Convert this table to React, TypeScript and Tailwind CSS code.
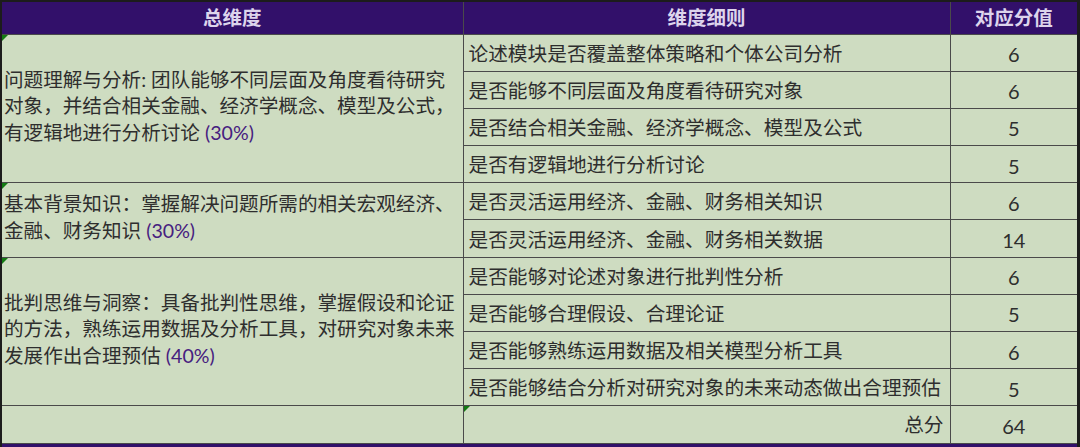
import React from "react";

const F = "font-['Lato','Noto_Sans_CJK_SC',sans-serif]";

const Tri = () => (
  <div className="absolute left-0 top-0 h-0 w-0 border-t-[6px] border-r-[6px] border-t-[#137a13] border-r-transparent" />
);

const P = ({ children }: { children: React.ReactNode }) => (
  <span className="text-[#46207f]">{children}</span>
);

type Row = { d: string; v: string };

const groups: { title: React.ReactNode; rows: Row[] }[] = [
  {
    title: (
      <>
        问题理解与分析: 团队能够不同层面及角度看待研究
        <br />
        对象，并结合相关金融、经济学概念、模型及公式，
        <br />
        有逻辑地进行分析讨论 <P>(30%)</P>
      </>
    ),
    rows: [
      { d: "论述模块是否覆盖整体策略和个体公司分析", v: "6" },
      { d: "是否能够不同层面及角度看待研究对象", v: "6" },
      { d: "是否结合相关金融、经济学概念、模型及公式", v: "5" },
      { d: "是否有逻辑地进行分析讨论", v: "5" },
    ],
  },
  {
    title: (
      <>
        基本背景知识：掌握解决问题所需的相关宏观经济、
        <br />
        金融、财务知识 <P>(30%)</P>
      </>
    ),
    rows: [
      { d: "是否灵活运用经济、金融、财务相关知识", v: "6" },
      { d: "是否灵活运用经济、金融、财务相关数据", v: "14" },
    ],
  },
  {
    title: (
      <>
        批判思维与洞察：具备批判性思维，掌握假设和论证
        <br />
        的方法，熟练运用数据及分析工具，对研究对象未来
        <br />
        发展作出合理预估 <P>(40%)</P>
      </>
    ),
    rows: [
      { d: "是否能够对论述对象进行批判性分析", v: "6" },
      { d: "是否能够合理假设、合理论证", v: "5" },
      { d: "是否能够熟练运用数据及相关模型分析工具", v: "6" },
      { d: "是否能够结合分析对研究对象的未来动态做出合理预估", v: "5" },
    ],
  },
];

const cell = "border-[1.5px] border-[#4a4a4a]";

export default function App() {
  return (
    <div className={`w-[1080px] h-[447px] overflow-hidden bg-[#1c1c1c] pl-[2px] pt-[2px] pr-[3px] ${F}`}>
      <table className="w-[1075px] table-fixed border-collapse bg-[#cedcc1] text-[#2e2e2e]">
        <colgroup>
          <col className="w-[461px]" />
          <col className="w-[487px]" />
          <col className="w-[127px]" />
        </colgroup>
        <thead>
          <tr className="h-[32px] bg-[#32106a] text-[19.5px] font-bold text-[#ddd4ec]">
            <th className={`${cell} border-t-0 border-l-0 text-center font-bold`}>总维度</th>
            <th className={`${cell} border-t-0 text-center font-bold`}>维度细则</th>
            <th className={`${cell} border-t-0 border-r-0 text-center font-bold`}>对应分值</th>
          </tr>
        </thead>
        <tbody>
          {groups.map((g, gi) =>
            g.rows.map((r, ri) => (
              <tr key={`${gi}-${ri}`} className="h-[37.2px]">
                {ri === 0 && (
                  <td
                    rowSpan={g.rows.length}
                    className={`${cell} border-l-0 relative whitespace-nowrap pl-[2px] align-middle text-[19.6px] leading-[26.5px]`}
                  >
                    <Tri />
                    <div className="-mt-[4px]">{g.title}</div>
                  </td>
                )}
                <td className={`${cell} whitespace-nowrap pl-[5px] pt-[2px] text-[19.7px] leading-[26px]`}>
                  {r.d}
                </td>
                <td className={`${cell} border-r-0 pt-[3px] text-center text-[20px] leading-[26px]`}>{r.v}</td>
              </tr>
            ))
          )}
          <tr className="h-[37.2px]">
            <td className={`${cell} border-l-0`}></td>
            <td className={`${cell} relative pr-[6px] pt-[2px] text-right text-[19.7px] leading-[26px]`}>
              <Tri />
              总分
            </td>
            <td className={`${cell} border-r-0 pt-[3px] text-center text-[20px] leading-[26px]`}>64</td>
          </tr>
          <tr className="h-[30px] bg-[#32106a]">
            <td colSpan={3} className={`${cell} border-l-0 border-r-0`}></td>
          </tr>
        </tbody>
      </table>
    </div>
  );
}
